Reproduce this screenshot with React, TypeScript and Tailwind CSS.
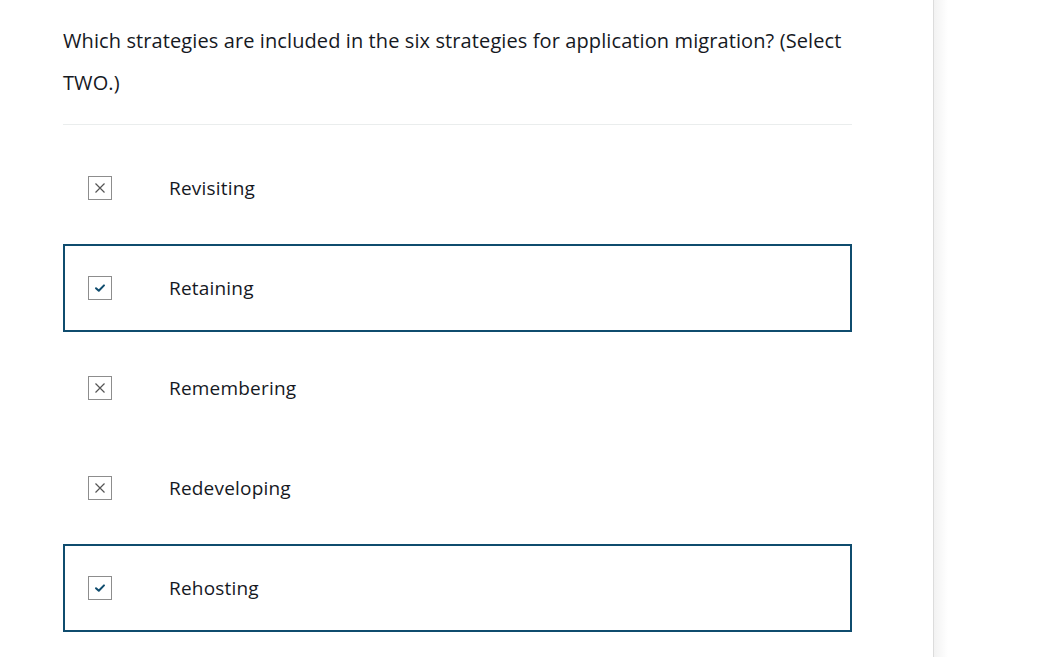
const options = [
  { label: "Revisiting", selected: false },
  { label: "Retaining", selected: true },
  { label: "Remembering", selected: false },
  { label: "Redeveloping", selected: false },
  { label: "Rehosting", selected: true },
];

const Box = ({ selected }: { selected: boolean }) => (
  <div className="w-[24px] h-[24px] border border-[#8d8d8d] bg-white flex items-center justify-center shrink-0">
    {selected ? (
      <svg width="12" height="10" viewBox="0 0 12 10">
        <path d="M2 5.2 L4.8 7.8 L10 2.4" fill="none" stroke="#0f4c6e" strokeWidth="2" strokeLinecap="round" strokeLinejoin="round" />
      </svg>
    ) : (
      <svg width="12" height="12" viewBox="0 0 12 12">
        <path d="M1.5 1.5 L10.5 10.5 M10.5 1.5 L1.5 10.5" stroke="#555" strokeWidth="1.2" />
      </svg>
    )}
  </div>
);

export default function App() {
  return (
    <div className="w-[1042px] h-[657px] overflow-hidden bg-white flex font-['Open_Sans',sans-serif] text-[#16191f]">
      <main className="w-[933px] shrink-0 pl-[63px] pt-[20px]">
        <div className="w-[789px]">
          <h1 className="text-[20px] leading-[42px] font-normal tracking-[0.1px]">
            Which strategies are included in the six strategies for application migration? (Select TWO.)
          </h1>
          <div className="h-px bg-[#eaeded] mt-[20px] mb-[19px]" />
          <div className="flex flex-col gap-[12px]">
            {options.map((o) => (
              <div
                key={o.label}
                className={`h-[88px] flex items-center pl-[23px] border-2 ${o.selected ? "border-[#0f4c6e]" : "border-transparent"}`}
              >
                <Box selected={o.selected} />
                <span className="ml-[57px] text-[19px] tracking-[0.2px] text-[#16191f]">{o.label}</span>
              </div>
            ))}
          </div>
        </div>
      </main>
      <aside className="flex-1 border-l border-[#dcdcdc] flex">
        <div className="w-[14px] bg-gradient-to-r from-[#f2f2f2] to-white" />
      </aside>
    </div>
  );
}
